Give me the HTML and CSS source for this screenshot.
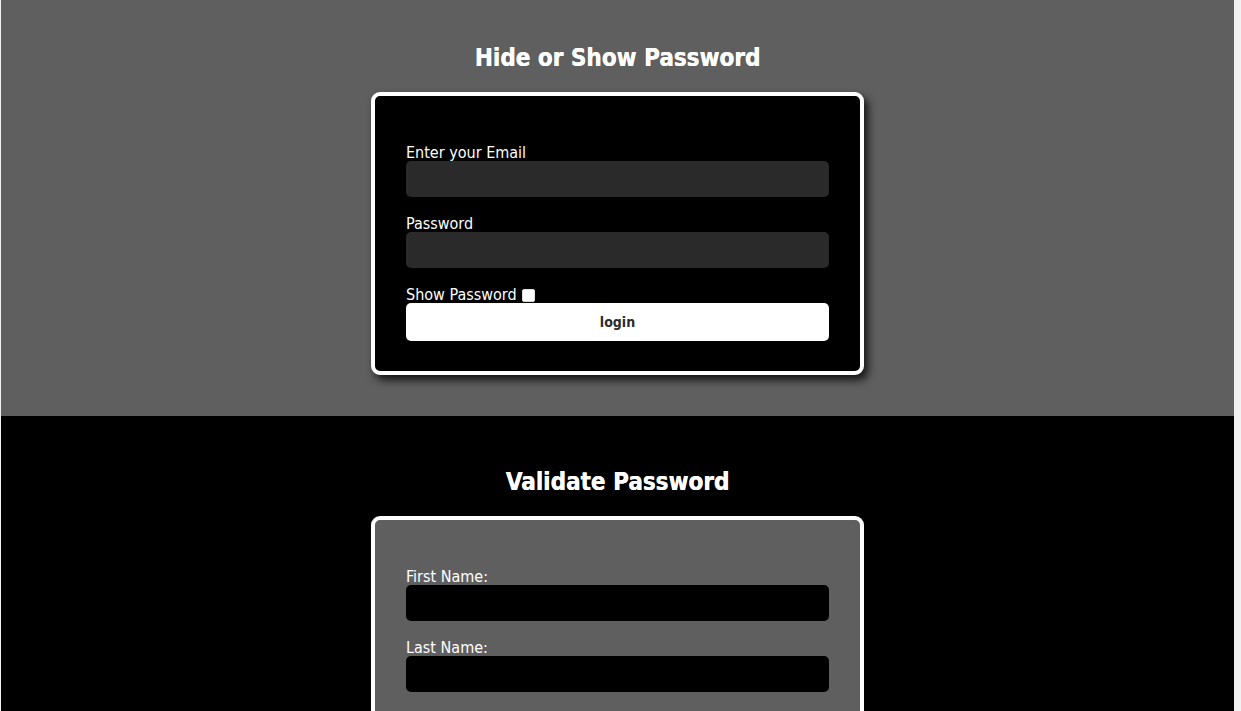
FILE: index.html
```html
<!DOCTYPE html>
<html lang="en">
<head>
<meta charset="utf-8">
<title>Password Forms</title>
<link rel="stylesheet" href="styles.css">
</head>
<body>
<div class="page">
  <section class="section section-grey">
    <h2 class="title">Hide or Show Password</h2>
    <form class="card card-dark">
      <label class="field-label" for="email">Enter your Email</label>
      <input class="field field-dark" id="email" type="email">
      <label class="field-label" for="pw">Password</label>
      <input class="field field-dark" id="pw" type="password">
      <label class="check-row">Show Password <span class="checkbox"></span></label>
      <button class="btn" type="button">login</button>
    </form>
  </section>
  <section class="section section-black">
    <h2 class="title">Validate Password</h2>
    <form class="card card-grey">
      <label class="field-label" for="fn">First Name:</label>
      <input class="field field-black" id="fn" type="text">
      <label class="field-label" for="ln">Last Name:</label>
      <input class="field field-black" id="ln" type="text">
    </form>
  </section>
</div>
</body>
</html>
```

FILE: styles.css
```css
html, body {
  margin: 0;
  padding: 0;
  height: 100%;
  overflow: hidden;
}
body {
  background: #f2f2f2;
  font-family: "DejaVu Sans Condensed", "DejaVu Sans", sans-serif;
  font-stretch: condensed;
  color: #fff;
}
.page {
  margin: 0 7px 0 1px;
  width: 1233px;
}
.section {
  display: flex;
  flex-direction: column;
  align-items: center;
}
.section-grey {
  background: #5f5f5f;
  padding: 44px 0 41px;
}
.section-black {
  background: #000;
  padding: 52px 0 60px;
}
.title {
  margin: 0 0 20px;
  font-size: 24px;
  line-height: 28px;
  font-weight: bold;
  text-shadow: 0.3px 0 0 #fff;
}
.card {
  box-sizing: border-box;
  width: 493px;
  border: 4px solid #fff;
  border-radius: 9px;
  padding: 46px 31px 30px;
  display: flex;
  flex-direction: column;
}
.card-dark {
  background: #000;
  box-shadow: 4px 5px 9px rgba(0, 0, 0, 0.8);
}
.card-grey {
  background: #5f5f5f;
}
.field-label, .check-row {
  font-size: 16px;
  line-height: 17px;
  height: 19px;
  display: flex;
  align-items: flex-end;
  gap: 5px;
}
.field {
  box-sizing: border-box;
  height: 36px;
  border: none;
  border-radius: 5px;
  margin: 0 0 16px;
  padding: 0 10px;
  width: 100%;
}
.field-dark { background: #2a2a2a; }
.field-black { background: #000; }
.checkbox {
  width: 11px;
  height: 11px;
  background: #fff;
  border: 1px solid #ddd;
  border-radius: 2px;
  margin-bottom: 1px;
}
.btn {
  height: 38px;
  border: none;
  border-radius: 5px;
  background: #fff;
  color: #2b2b2b;
  font-family: inherit;
  font-size: 14px;
  font-weight: bold;
}
```
